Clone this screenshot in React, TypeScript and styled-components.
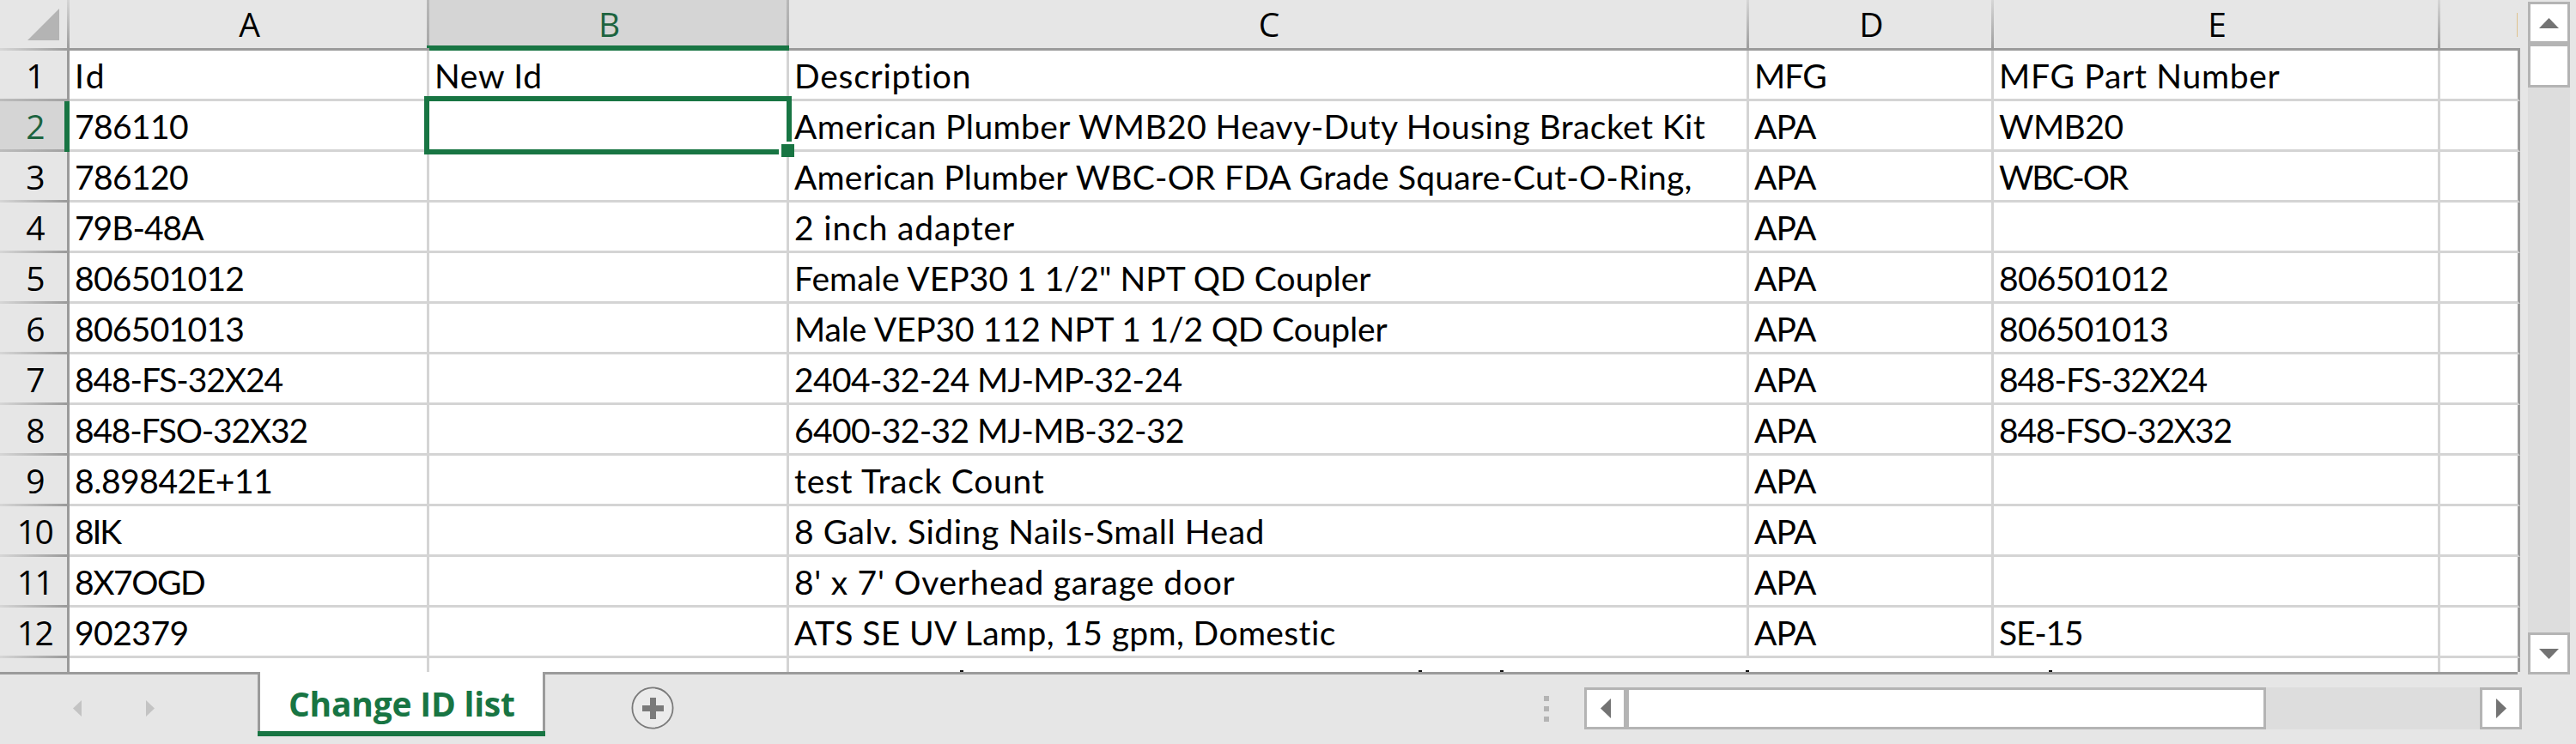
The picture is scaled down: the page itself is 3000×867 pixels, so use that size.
import React, { useState } from 'react';
import styled, { createGlobalStyle } from 'styled-components';

const GREEN = '#187543';
const LINE = '#d4d4d4';
const DARK_LINE = '#9b9b9b';
const CHROME = '#e6e6e6';
const COLUMNS = '81px 419px 419px 1118px 285px 520px 93px';

const GlobalStyle = createGlobalStyle`
    body {
        margin: 0;
        background-color: ${CHROME};
        overflow: hidden;
    }
    * {
        box-sizing: border-box;
    }
`;

const Window = styled.div`
    display: flex;
    flex-direction: column;
    width: 3000px;
    height: 867px;
    background-color: ${CHROME};
    color: #000;
`;

const Main = styled.div`
    display: flex;
    height: 783px;
`;

const Grid = styled.div`
    width: 2935px;
    height: 783px;
    overflow: hidden;
`;

const HeaderRow = styled.div`
    display: grid;
    grid-template-columns: ${COLUMNS};
    height: 59px;
`;

const Row = styled.div<{ $partial?: boolean }>`
    display: grid;
    grid-template-columns: ${COLUMNS};
    grid-template-rows: 100%;
    height: ${props => (props.$partial ? '16px' : '59px')};
`;

const Corner = styled.div`
    display: flex;
    justify-content: flex-end;
    padding: 10px 12px 0 0;
    background:
        linear-gradient(to right, #d6d6d6, ${DARK_LINE}) left bottom / 100% 3px no-repeat,
        linear-gradient(to bottom, #d6d6d6, ${DARK_LINE}) right top / 3px 100% no-repeat,
        ${CHROME};
`;

const ColumnHeader = styled.div<{ $active?: boolean; $beforeActive?: boolean; $last?: boolean }>`
    height: 59px;
    overflow: hidden;
    text-align: center;
    font: 400 39px/56px 'Open Sans', sans-serif;
    color: ${props => (props.$active ? '#1d6440' : '#000')};
    background:
        linear-gradient(${props => (props.$active ? GREEN : DARK_LINE)} 0 0)
            left bottom / 100% ${props => (props.$active ? '6px' : '3px')} no-repeat,
        ${props => props.$beforeActive && `linear-gradient(${GREEN} 0 0) right bottom / 3px 6px no-repeat,`}
        linear-gradient(to bottom, ${props =>
            props.$active || props.$beforeActive ? '#b8b8b8, #a6a6a6' : `#d6d6d6, ${DARK_LINE}`})
            right top / ${props => (props.$last ? '0' : '3px')} 100% no-repeat,
        ${props => (props.$active ? '#d5d5d5' : CHROME)};
`;

const ClippedLetter = styled.span`
    display: block;
    width: 1px;
    height: 28px;
    margin: 15px 0 0 89px;
    background-color: #dfc28e;
`;

const RowHeader = styled.div<{ $active?: boolean; $dark?: boolean; $partial?: boolean }>`
    border-right: ${props => (props.$active ? `6px solid ${GREEN}` : `3px solid ${DARK_LINE}`)};
    padding-left: ${props => (props.$active ? '6px' : '3px')};
    text-align: center;
    font: 400 39px/58px 'Open Sans', sans-serif;
    letter-spacing: -1.6px;
    color: ${props => (props.$active ? '#1d6440' : '#000')};
    background:
        linear-gradient(to right, ${props => (props.$dark ? '#bcbcbc, #a3a3a3' : `#d6d6d6, ${DARK_LINE}`)})
            left bottom / 100% ${props => (props.$partial ? '0' : '3px')} no-repeat,
        ${props => (props.$active ? '#d5d5d5' : CHROME)};
`;

const Cell = styled.div<{ $tracking?: number; $last?: boolean; $partial?: boolean; $spill?: boolean }>`
    position: relative;
    padding-left: 6px;
    background-color: #fff;
    border-right: 3px solid ${props => (props.$last ? DARK_LINE : props.$spill ? '#fff' : LINE)};
    border-bottom: ${props => (props.$partial ? 'none' : `3px solid ${LINE}`)};
    font: 400 39px/58px Lato, sans-serif;
    letter-spacing: ${props => props.$tracking || 0}px;
    white-space: pre;
`;

// frame drawn over the borders of the active cell
const Selection = styled.div`
    position: absolute;
    z-index: 1;
    top: -6px;
    left: -6px;
    width: 428px;
    height: 68px;
    border: 6px solid ${GREEN};
`;

const FillHandle = styled.div`
    position: absolute;
    right: -9px;
    bottom: -9px;
    width: 18px;
    height: 18px;
    background-color: ${GREEN};
    border-top: 3px solid #fff;
    border-left: 3px solid #fff;
`;

const ScrollColumn = styled.div`
    position: relative;
    display: flex;
    flex-direction: column;
    width: 49px;
    height: 784px;
    margin: 2px 0 0 9px;
    background-color: #ddd;
`;

const ScrollButton = styled.button`
    display: flex;
    flex: none;
    align-items: center;
    justify-content: center;
    width: 49px;
    height: 49px;
    padding: 0;
    border: 3px solid #b4b4b4;
    background-color: #fff;
`;

const VerticalThumb = styled.div`
    height: 51px;
    margin-bottom: auto;
    border: 3px solid #b4b4b4;
    background-color: #fff;
`;

const Footer = styled.div`
    display: flex;
    height: 84px;
`;

const FooterSection = styled.div<{ $width: number }>`
    display: flex;
    align-items: flex-start;
    width: ${props => props.$width}px;
    border-top: 3px solid ${DARK_LINE};
`;

const NavArrows = styled.div`
    display: flex;
    gap: 75px;
    margin: 30px 0 0 85px;
`;

const TabColumn = styled.div`
    width: 335px;
`;

const SheetTab = styled.div`
    height: 69px;
    padding-left: 33px;
    background-color: #fff;
    border-left: 3px solid ${DARK_LINE};
    border-right: 3px solid ${DARK_LINE};
    color: ${GREEN};
    font: 700 39px/74px 'Open Sans', sans-serif;
    letter-spacing: -0.23px;
    white-space: pre;
`;

const TabUnderline = styled.div`
    height: 6px;
    background-color: ${GREEN};
`;

const AddSheet = styled.button`
    width: 50px;
    height: 50px;
    margin: 14px 0 0 100px;
    padding: 0;
    border: none;
    background: none;
`;

const Dots = styled.div`
    display: flex;
    flex-direction: column;
    gap: 6px;
    margin: 25px 41px 0 auto;
`;

const Dot = styled.span`
    width: 6px;
    height: 6px;
    background-color: #b4b4b4;
`;

const HorizontalScroll = styled.div`
    display: flex;
    width: 1092px;
    height: 49px;
    margin: 15px -5px 0 0;
    background-color: #ddd;
`;

const HorizontalThumb = styled.div`
    width: 745px;
    margin-right: auto;
    border: 3px solid #b4b4b4;
    background-color: #fff;
`;

// tops of the ascenders in the row cut off by the sheet bar
const Ascenders = styled.svg`
    position: absolute;
    z-index: 1;
    left: 0;
    bottom: 0;
`;

type Direction = 'up' | 'down' | 'left' | 'right';

const shapes: Record<Direction, string> = {
    up: 'M0 12L11.5 0L23 12Z',
    down: 'M0 0H23L11.5 12Z',
    left: 'M12 0V23L0 11.5Z',
    right: 'M0 0L12 11.5L0 23Z',
};

const Arrow: React.FC<{ direction: Direction }> = ({ direction }) => {
    const vertical = direction === 'up' || direction === 'down';
    return (
        <svg width={vertical ? 23 : 12} height={vertical ? 12 : 23} fill="#737373">
            <path d={shapes[direction]} />
        </svg>
    );
};

// [text, letter spacing]
type CellData = [string, number];
const none: CellData = ['', 0];
const apa: CellData = ['APA', -0.9];

const rows: CellData[][] = [
    [['Id', 2.4], ['New Id', 0.7], ['Description', 0.76], ['MFG', -0.9], ['MFG Part Number', 0.72]],
    [['786110', -0.6], none, ['American Plumber WMB20 Heavy-Duty Housing Bracket Kit', 0.42], apa, ['WMB20', -0.5]],
    [['786120', -0.6], none, ['American Plumber WBC-OR FDA Grade Square-Cut-O-Ring,', 0.22], apa, ['WBC-OR', -2.1]],
    [['79B-48A', -1], none, ['2 inch adapter', 0.86], apa, none],
    [['806501012', -0.7], none, ['Female VEP30 1 1/2" NPT QD Coupler', 0.06], apa, ['806501012', -0.7]],
    [['806501013', -0.7], none, ['Male VEP30 112 NPT 1 1/2 QD Coupler', -0.14], apa, ['806501013', -0.7]],
    [['848-FS-32X24', -1.1], none, ['2404-32-24 MJ-MP-32-24', -0.63], apa, ['848-FS-32X24', -1.1]],
    [['848-FSO-32X32', -1.2], none, ['6400-32-32 MJ-MB-32-32', -0.64], apa, ['848-FSO-32X32', -1.2]],
    [['8.89842E+11', -0.45], none, ['test Track Count', 0.75], apa, none],
    [['8IK', -2.1], none, ['8 Galv. Siding Nails-Small Head', 0.54], apa, none],
    [['8X7OGD', -1.45], none, ["8' x 7' Overhead garage door", 0.72], apa, none],
    [['902379', -0.5], none, ['ATS SE UV Lamp, 15 gpm, Domestic', 0.38], apa, ['SE-15', -1.2]],
];

const App: React.FC = () => {
    const [activeRow] = useState(1);
    const [activeColumn] = useState(1);

    return (
        <Window>
            <GlobalStyle />
            <Main>
                <Grid>
                    <HeaderRow>
                        <Corner>
                            <svg width="37" height="37" fill="#b4b4b4">
                                <path d="M37 0V37H0Z" />
                            </svg>
                        </Corner>
                        {['A', 'B', 'C', 'D', 'E'].map((name, index) => (
                            <ColumnHeader
                                key={name}
                                $active={index === activeColumn}
                                $beforeActive={index === activeColumn - 1}
                            >
                                {name}
                            </ColumnHeader>
                        ))}
                        <ColumnHeader $last>
                            <ClippedLetter />
                        </ColumnHeader>
                    </HeaderRow>
                    {rows.map((cells, rowIndex) => (
                        <Row key={rowIndex}>
                            <RowHeader
                                $active={rowIndex === activeRow}
                                $dark={rowIndex === activeRow || rowIndex === activeRow - 1}
                            >
                                {rowIndex + 1}
                            </RowHeader>
                            {cells.map(([text, tracking], index) => (
                                <Cell key={index} $tracking={tracking}>
                                    {text}
                                    {rowIndex === activeRow && index === activeColumn && (
                                        <Selection>
                                            <FillHandle />
                                        </Selection>
                                    )}
                                </Cell>
                            ))}
                            <Cell $last />
                        </Row>
                    ))}
                    <Row $partial>
                        <RowHeader $partial />
                        <Cell $partial />
                        <Cell $partial />
                        <Cell $partial $spill>
                            <Ascenders width="1500" height="2" fill="#111">
                                {[199, 733, 828, 1114, 1467].map(x => (
                                    <rect key={x} x={x} width="4" height="2" />
                                ))}
                            </Ascenders>
                        </Cell>
                        <Cell $partial $spill />
                        <Cell $partial />
                        <Cell $partial $last />
                    </Row>
                </Grid>
                <ScrollColumn>
                    <ScrollButton><Arrow direction="up" /></ScrollButton>
                    <VerticalThumb />
                    <ScrollButton><Arrow direction="down" /></ScrollButton>
                </ScrollColumn>
            </Main>
            <Footer>
                <FooterSection $width={300}>
                    <NavArrows>
                        <svg width="10" height="19" fill="#c3c3c3"><path d="M10 0V19L0 9.5Z" /></svg>
                        <svg width="10" height="19" fill="#c3c3c3"><path d="M0 0V19L10 9.5Z" /></svg>
                    </NavArrows>
                </FooterSection>
                <TabColumn>
                    <SheetTab>Change ID list</SheetTab>
                    <TabUnderline />
                </TabColumn>
                <FooterSection $width={2297}>
                    <AddSheet>
                        <svg width="50" height="50">
                            <circle cx="25" cy="25" r="23.6" fill="#ebebeb" stroke="#7a7a7a" strokeWidth="1.8" />
                            <path d="M13 25.5H38M25.5 13V38" stroke="#7a7a7a" strokeWidth="7" />
                        </svg>
                    </AddSheet>
                    <Dots>
                        <Dot />
                        <Dot />
                        <Dot />
                    </Dots>
                    <HorizontalScroll>
                        <ScrollButton><Arrow direction="left" /></ScrollButton>
                        <HorizontalThumb />
                        <ScrollButton><Arrow direction="right" /></ScrollButton>
                    </HorizontalScroll>
                </FooterSection>
            </Footer>
        </Window>
    );
};

export default App;
